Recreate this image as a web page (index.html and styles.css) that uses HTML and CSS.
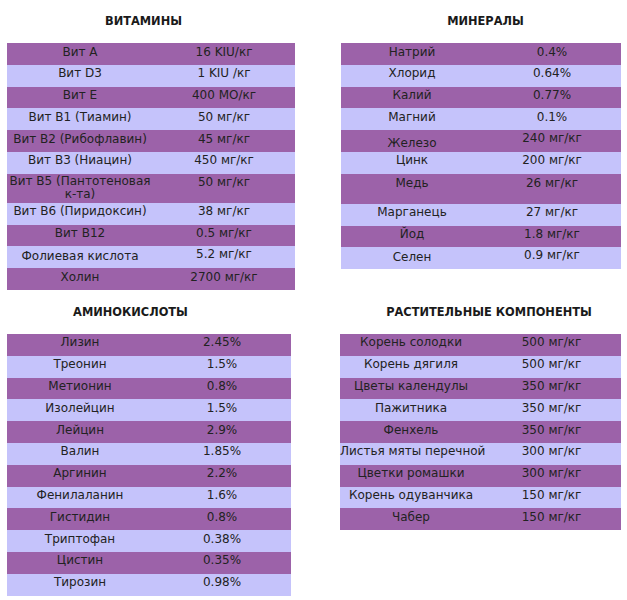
FILE: index.html
```html
<!DOCTYPE html>
<html lang="ru">
<head>
<meta charset="utf-8">
<title>Состав</title>
<link rel="stylesheet" href="styles.css">
</head>
<body>
<div class="page">
  <section class="block">
    <h2 class="title title-vit">ВИТАМИНЫ</h2>
    <table class="comp comp-vit">
      <tr><td>Вит A</td><td>16 KIU/кг</td></tr>
      <tr><td>Вит D3</td><td>1 KIU /кг</td></tr>
      <tr><td>Вит E</td><td>400 MO/кг</td></tr>
      <tr><td>Вит B1 (Тиамин)</td><td>50 мг/кг</td></tr>
      <tr><td>Вит B2 (Рибофлавин)</td><td>45 мг/кг</td></tr>
      <tr><td>Вит B3 (Ниацин)</td><td>450 мг/кг</td></tr>
      <tr class="two"><td>Вит B5 (Пантотеновая<br>к-та)</td><td>50 мг/кг</td></tr>
      <tr><td>Вит B6 (Пиридоксин)</td><td>38 мг/кг</td></tr>
      <tr><td>Вит B12</td><td>0.5 мг/кг</td></tr>
      <tr class="split"><td>Фолиевая кислота</td><td>5.2 мг/кг</td></tr>
      <tr><td>Холин</td><td>2700 мг/кг</td></tr>
    </table>
  </section>
  <section class="block">
    <h2 class="title title-min">МИНЕРАЛЫ</h2>
    <table class="comp comp-min">
      <tr><td>Натрий</td><td>0.4%</td></tr>
      <tr><td>Хлорид</td><td>0.64%</td></tr>
      <tr><td>Калий</td><td>0.77%</td></tr>
      <tr><td>Магний</td><td>0.1%</td></tr>
      <tr class="split-wide"><td>Железо</td><td>240 мг/кг</td></tr>
      <tr><td>Цинк</td><td>200 мг/кг</td></tr>
      <tr class="tall"><td>Медь</td><td>26 мг/кг</td></tr>
      <tr><td>Марганець</td><td>27 мг/кг</td></tr>
      <tr><td>Йод</td><td>1.8 мг/кг</td></tr>
      <tr class="split"><td>Селен</td><td>0.9 мг/кг</td></tr>
    </table>
  </section>
  <section class="block">
    <h2 class="title title-amino">АМИНОКИСЛОТЫ</h2>
    <table class="comp comp-amino">
      <tr><td>Лизин</td><td>2.45%</td></tr>
      <tr><td>Треонин</td><td>1.5%</td></tr>
      <tr><td>Метионин</td><td>0.8%</td></tr>
      <tr><td>Изолейцин</td><td>1.5%</td></tr>
      <tr><td>Лейцин</td><td>2.9%</td></tr>
      <tr><td>Валин</td><td>1.85%</td></tr>
      <tr><td>Аргинин</td><td>2.2%</td></tr>
      <tr><td>Фенилаланин</td><td>1.6%</td></tr>
      <tr><td>Гистидин</td><td>0.8%</td></tr>
      <tr><td>Триптофан</td><td>0.38%</td></tr>
      <tr><td>Цистин</td><td>0.35%</td></tr>
      <tr><td>Тирозин</td><td>0.98%</td></tr>
    </table>
  </section>
  <section class="block">
    <h2 class="title title-plant">РАСТИТЕЛЬНЫЕ КОМПОНЕНТЫ</h2>
    <table class="comp comp-plant">
      <tr><td>Корень солодки</td><td>500 мг/кг</td></tr>
      <tr><td>Корень дягиля</td><td>500 мг/кг</td></tr>
      <tr><td>Цветы календулы</td><td>350 мг/кг</td></tr>
      <tr><td>Пажитника</td><td>350 мг/кг</td></tr>
      <tr><td>Фенхель</td><td>350 мг/кг</td></tr>
      <tr><td>Листья мяты перечной</td><td>300 мг/кг</td></tr>
      <tr><td>Цветки ромашки</td><td>300 мг/кг</td></tr>
      <tr><td>Корень одуванчика</td><td>150 мг/кг</td></tr>
      <tr><td>Чабер</td><td>150 мг/кг</td></tr>
    </table>
  </section>
</div>
</body>
</html>
```

FILE: styles.css
```css
html, body {
  margin: 0;
  padding: 0;
  background: #ffffff;
}

body {
  font-family: "DejaVu Sans", Verdana, sans-serif;
  color: #222222;
}

.page {
  display: grid;
  grid-template-columns: 288px 281px;
  column-gap: 45px;
  row-gap: 1px;
  padding-left: 7px;
  align-items: start;
}

.block {
  display: flex;
  flex-direction: column;
}

.title {
  margin: 0;
  height: 43px;
  padding-top: 14px;
  box-sizing: border-box;
  font-size: 11.4px;
  line-height: 14px;
  font-weight: bold;
  text-align: center;
  color: #1a1a1a;
}

.title-vit { padding-right: 15px; }
.title-min { padding-left: 10px; }
.title-amino { padding-right: 41px; }
.title-plant { padding-left: 17px; }

.comp {
  border-collapse: collapse;
  border-spacing: 0;
  table-layout: fixed;
  font-size: 12px;
  line-height: 12px;
}

.comp-vit { width: 288px; }
.comp-min { width: 280px; margin-left: 1px; }
.comp-amino { width: 284px; }
.comp-plant { width: 281px; }

.comp-vit td:first-child,
.comp-amino td:first-child { width: 146px; }
.comp-min td:first-child,
.comp-plant td:first-child { width: 142px; }

.comp tr { height: 21.8px; }
.comp tr:nth-child(odd) { background: #9c62a9; }
.comp tr:nth-child(even) { background: #c5c3fb; }

.comp td {
  padding: 2.5px 0;
  vertical-align: top;
  text-align: center;
  white-space: nowrap;
}

.comp tr.two { height: 29px; }
.comp tr.two td:first-child { line-height: 13px; padding-top: 1.5px; padding-bottom: 1.5px; }
.comp tr.tall { height: 30px; }
.comp tr.tall td { padding-top: 3.5px; }

.comp tr.split td:first-child { padding-top: 3.8px; }
.comp tr.split td:last-child { padding-top: 1.2px; }
.comp tr.split-wide td:first-child { padding-top: 6.5px; }
.comp tr.split-wide td:last-child { padding-top: 1.5px; }
```
